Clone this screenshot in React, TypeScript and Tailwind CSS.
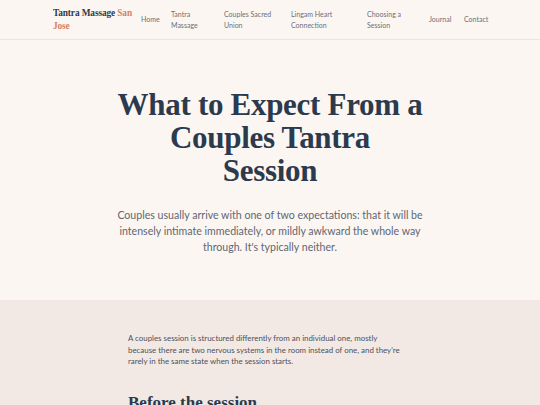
const nav = [
  { label: 'Home', w: 'w-[18px]' },
  { label: 'Tantra Massage', w: 'w-[41px]' },
  { label: 'Couples Sacred Union', w: 'w-[55px]' },
  { label: 'Lingam Heart Connection', w: 'w-[64px]' },
  { label: 'Choosing a Session', w: 'w-[50px]' },
  { label: 'Journal', w: 'w-[23px]' },
  { label: 'Contact', w: 'w-[24px]' },
]

const serif = "font-['Liberation_Serif',serif]"

export default function App() {
  return (
    <div className="min-h-screen bg-[#fbf6f2] font-['Lato',sans-serif] text-[#2b3a4d]">
      {/* Header */}
      <header className="border-b border-[#ece4de]">
        <div className="mx-auto flex h-[39px] max-w-[434px] items-center gap-[4px]">
          <a className={`${serif} w-[84px] shrink-0 whitespace-nowrap text-[9.3px] font-bold leading-[13px] tracking-[-0.1px] text-[#2b3a4d]`}>
            Tantra Massage <span className="text-[#d5806a]">San</span>
            <br />
            <span className="text-[#d5806a]">Jose</span>
          </a>
          <nav className="flex items-center gap-3">
            {nav.map((n) => (
              <a key={n.label} className={`${n.w} shrink-0 text-[7px] leading-[10.5px] text-[#6b6f78]`}>
                {n.label}
              </a>
            ))}
          </nav>
        </div>
      </header>

      {/* Hero */}
      <section className="flex h-[260px] flex-col items-center pt-[48px]">
        <h1 className={`${serif} text-center text-[31px] font-bold leading-[33px] tracking-[-0.3px] text-[#2b3a4d]`}>
          What to Expect From a<br />
          Couples Tantra<br />
          Session
        </h1>
        <p className="mt-[20px] max-w-[310px] text-center text-[10.6px] leading-[16px] text-[#5f6673]">
          Couples usually arrive with one of two expectations: that it will be intensely intimate immediately, or mildly
          awkward the whole way through. It's typically neither.
        </p>
      </section>

      {/* Body */}
      <section className="bg-[#f3e9e4] pt-[33px]">
        <div className="mx-auto max-w-[284px]">
          <p className="max-w-[274px] text-[7.9px] leading-[11.5px] text-[#4a505b]">
            A couples session is structured differently from an individual one, mostly because there are two nervous
            systems in the room instead of one, and they're rarely in the same state when the session starts.
          </p>
          <h2 className={`${serif} mt-[25px] text-[17px] font-bold leading-[20px] text-[#2b3a4d]`}>Before the session</h2>
        </div>
      </section>
    </div>
  )
}
